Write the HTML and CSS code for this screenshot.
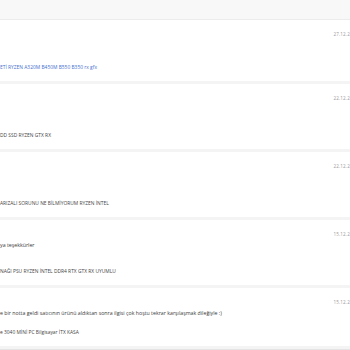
FILE: index.html
```html
<!DOCTYPE html>
<html lang="tr">
<head>
<meta charset="utf-8">
<link rel="stylesheet" href="styles.css">
</head>
<body>
<div class="page">
  <div class="topband"></div>
  <div class="card c1">
    <div class="date">27.12.2</div>
    <div class="spacer"></div>
    <div class="product blue">ETİ RYZEN A320M B450M B550 B350 rx gfx</div>
  </div>
  <div class="card c2">
    <div class="date">22.12.2</div>
    <div class="spacer"></div>
    <div class="product">DD SSD RYZEN GTX RX</div>
  </div>
  <div class="card c3">
    <div class="date">22.12.2</div>
    <div class="spacer"></div>
    <div class="product">ARIZALI SORUNU NE BİLMİYORUM RYZEN İNTEL</div>
  </div>
  <div class="card c4">
    <div class="date">15.12.2</div>
    <div class="comment">ya teşekkürler</div>
    <div class="spacer"></div>
    <div class="product">NAĞI PSU RYZEN İNTEL DDR4 RTX GTX RX UYUMLU</div>
  </div>
  <div class="card c5">
    <div class="date">15.12.2</div>
    <div class="comment">e bir notta geldi satıcının ürünü aldıktan sonra ilgisi çok hoştu tekrar karşılaşmak dileğiyle :)</div>
    <div class="spacer"></div>
    <div class="product">e 3040 MİNİ PC Bilgisayar İTX KASA</div>
  </div>
  <div class="bottombar"></div>
</div>
</body>
</html>
```

FILE: styles.css
```css
html, body {
  margin: 0;
  padding: 0;
  overflow: hidden;
  background: #ffffff;
}
.page {
  width: 350px;
  height: 350px;
  display: flex;
  flex-direction: column;
  font-family: "Open Sans", "Liberation Sans", sans-serif;
  background: #f4f4f4;
  gap: 3px;
}
.topband {
  height: 19px;
  background: #f8f8f8;
  border-bottom: 1px solid #ececec;
  flex: none;
}
.card {
  background: #ffffff;
  display: flex;
  flex-direction: column;
  flex: none;
  box-sizing: border-box;
  padding: 11px 0 0 0;
}
.c1 { height: 61px; margin-top: -3px; }
.c2 { height: 65px; }
.c3 { height: 65px; }
.c4 { height: 65px; }
.c5 { height: 58px; }
.date {
  align-self: flex-end;
  font-size: 4.6px;
  color: #9a9a9a;
  letter-spacing: 0.15px;
  line-height: 6px;
}
.comment {
  font-size: 5.25px;
  color: #3a3a3a;
  line-height: 6px;
  margin-top: 5px;
  white-space: nowrap;
}
.spacer { flex: 1; }
.product {
  font-size: 4.9px;
  line-height: 6px;
  color: #444;
  white-space: nowrap;
  margin-bottom: 11px;
}
.product.blue { color: #3f6fd0; }
.bottombar {
  flex: 1;
  background: #e4e4e4;
}
```
